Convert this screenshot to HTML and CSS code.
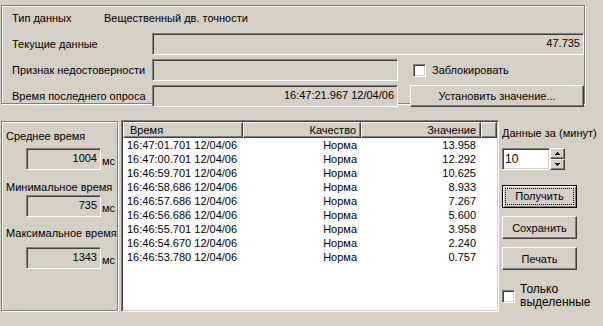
FILE: index.html
```html
<!DOCTYPE html>
<html lang="ru">
<head>
    <meta charset="UTF-8">
    <title>Данные</title>
    <link rel="stylesheet" href="styles.css">
</head>
<body>
    <div class="okno">
        <section class="gruppa verh">
            <div class="stroka tip">
                <span class="metka-tip">Тип данных</span>
                <span>Вещественный дв. точности</span>
            </div>
            <div class="stroka">
                <span class="metka">Текущие данные</span>
                <div class="pole shirokoe">47.735</div>
            </div>
            <div class="stroka">
                <span class="metka">Признак недостоверности</span>
                <div class="pole"></div>
                <label class="flag"><span class="galka"></span>Заблокировать</label>
            </div>
            <div class="stroka">
                <span class="metka">Время последнего опроса</span>
                <div class="pole">16:47:21.967 12/04/06</div>
                <button class="knopka ustanovit">Установить значение...</button>
            </div>
        </section>

        <section class="niz">
            <div class="gruppa vremena">
                <div class="podpis">Среднее время</div>
                <div class="izmerenie i1">
                    <div class="pole malo">1004</div>
                    <span class="ms">мс</span>
                </div>
                <div class="podpis p2">Минимальное время</div>
                <div class="izmerenie i2">
                    <div class="pole malo">735</div>
                    <span class="ms">мс</span>
                </div>
                <div class="podpis p3">Максимальное время</div>
                <div class="izmerenie i3">
                    <div class="pole malo">1343</div>
                    <span class="ms">мс</span>
                </div>
            </div>

            <div class="spisok">
                <div class="zagolovok">
                    <div class="k1">Время</div>
                    <div class="k2">Качество</div>
                    <div class="k3">Значение</div>
                    <div class="k4"></div>
                </div>
                <div class="ryad"><span class="k1">16:47:01.701 12/04/06</span><span class="k2">Норма</span><span class="k3">13.958</span></div>
                <div class="ryad"><span class="k1">16:47:00.701 12/04/06</span><span class="k2">Норма</span><span class="k3">12.292</span></div>
                <div class="ryad"><span class="k1">16:46:59.701 12/04/06</span><span class="k2">Норма</span><span class="k3">10.625</span></div>
                <div class="ryad"><span class="k1">16:46:58.686 12/04/06</span><span class="k2">Норма</span><span class="k3">8.933</span></div>
                <div class="ryad"><span class="k1">16:46:57.686 12/04/06</span><span class="k2">Норма</span><span class="k3">7.267</span></div>
                <div class="ryad"><span class="k1">16:46:56.686 12/04/06</span><span class="k2">Норма</span><span class="k3">5.600</span></div>
                <div class="ryad"><span class="k1">16:46:55.701 12/04/06</span><span class="k2">Норма</span><span class="k3">3.958</span></div>
                <div class="ryad"><span class="k1">16:46:54.670 12/04/06</span><span class="k2">Норма</span><span class="k3">2.240</span></div>
                <div class="ryad"><span class="k1">16:46:53.780 12/04/06</span><span class="k2">Норма</span><span class="k3">0.757</span></div>
            </div>

            <div class="pravo">
                <div class="podpis">Данные за (минут)</div>
                <div class="schetchik">
                    <div class="vvod">10</div>
                    <div class="strelki">
                        <div class="strelka">
                            <svg width="5" height="3" viewBox="0 0 5 3" shape-rendering="crispEdges"><rect x="2" y="0" width="1" height="1"/><rect x="1" y="1" width="3" height="1"/><rect x="0" y="2" width="5" height="1"/></svg>
                        </div>
                        <div class="strelka">
                            <svg width="5" height="3" viewBox="0 0 5 3" shape-rendering="crispEdges"><rect x="0" y="0" width="5" height="1"/><rect x="1" y="1" width="3" height="1"/><rect x="2" y="2" width="1" height="1"/></svg>
                        </div>
                    </div>
                </div>
                <button class="knopka glavnaya"><span>Получить</span></button>
                <button class="knopka">Сохранить</button>
                <button class="knopka">Печать</button>
                <label class="flag-niz"><span class="galka"></span><span class="tekst">Только<br>выделенные</span></label>
            </div>
        </section>
    </div>
</body>
</html>
```

FILE: styles.css
```css
body {
    margin: 0;
    background-color: #d4d0c8;
    font-family: "Liberation Sans", Arial, sans-serif;
    font-size: 11px;
    color: #000;
}

.okno {
    box-sizing: border-box;
    width: 603px;
    height: 326px;
    padding: 5px 0 0 1px;
    overflow: hidden;
}

/* рамка группы (вдавленная линия) */
.gruppa {
    box-sizing: border-box;
    border: 1px solid #808080;
    box-shadow: inset 1px 1px #fff, 1px 1px #fff;
}

.verh {
    width: 584px;
    height: 99px;
    padding-left: 10px;
}

.stroka {
    display: flex;
    align-items: center;
    height: 22px;
    margin-top: 4px;
    white-space: nowrap;
}

.stroka.tip {
    height: 23px;
    margin-top: 0;
}

.metka-tip {
    width: 92px;
}

.metka {
    width: 140px;
}

.pole {
    box-sizing: border-box;
    width: 246px;
    height: 22px;
    border: 1px solid;
    border-color: #808080 #fff #fff #808080;
    box-shadow: inset 1px 1px #404040, inset -1px -1px #d4d0c8;
    background-color: #d4d0c8;
    text-align: right;
    padding-right: 3px;
    line-height: 19px;
    white-space: nowrap;
}

.pole.shirokoe {
    flex: 1;
}

.galka {
    box-sizing: border-box;
    display: inline-block;
    width: 13px;
    height: 13px;
    border: 1px solid;
    border-color: #808080 #fff #fff #808080;
    box-shadow: inset 1px 1px #404040, inset -1px -1px #d4d0c8;
    background-color: #fff;
}

.flag {
    display: flex;
    align-items: center;
    margin-left: 15px;
}

.flag .galka {
    margin-right: 6px;
}

.knopka {
    box-sizing: border-box;
    display: block;
    width: 75px;
    height: 23px;
    margin: 8px 0 0 0;
    padding: 0;
    font-family: inherit;
    font-size: 11px;
    color: #000;
    background-color: #d4d0c8;
    border: 1px solid;
    border-color: #fff #404040 #404040 #fff;
    box-shadow: inset -1px -1px #808080;
    border-radius: 0;
}

.knopka.ustanovit {
    width: 174px;
    height: 22px;
    margin: 0 0 0 12px;
}

.knopka.glavnaya {
    margin-top: 15px;
    padding: 2px;
    border: 1px solid #000;
    box-shadow: inset 1px 1px #fff, inset -1px -1px #808080;
}

.knopka.glavnaya span {
    display: block;
    height: 100%;
    box-sizing: border-box;
    border: 1px dotted #000;
    line-height: 15px;
}

.niz {
    display: flex;
    align-items: flex-start;
    margin-top: 16px;
}

.vremena {
    width: 117px;
    height: 190px;
    margin-top: 1px;
    padding: 7px 0 0 4px;
}

.podpis {
    line-height: 14px;
    white-space: nowrap;
}

.podpis.p2 {
    margin-top: 10px;
}

.podpis.p3 {
    margin-top: 9px;
}

.izmerenie {
    display: flex;
    align-items: flex-start;
    margin-left: 20px;
}

.izmerenie.i1 {
    margin-top: 5px;
}

.izmerenie.i2 {
    margin-top: 1px;
}

.izmerenie.i3 {
    margin-top: 7px;
}

.pole.malo {
    width: 75px;
}

.ms {
    margin: 6px 0 0 1px;
    line-height: 14px;
}

.spisok {
    box-sizing: border-box;
    width: 378px;
    height: 192px;
    margin-left: 3px;
    padding: 1px;
    background-color: #fff;
    border: 1px solid;
    border-color: #808080 #fff #fff #808080;
    box-shadow: inset 1px 1px #404040, inset -1px -1px #d4d0c8;
}

.zagolovok {
    display: flex;
    height: 16px;
    background-color: #d4d0c8;
}

.zagolovok div {
    box-sizing: border-box;
    height: 16px;
    line-height: 14px;
    border: 1px solid;
    border-color: #fff #404040 #404040 #fff;
    box-shadow: inset -1px -1px #808080;
    padding-right: 4px;
    text-align: right;
}

.zagolovok .k1 {
    padding-left: 6px;
    text-align: left;
}

.k1 {
    width: 120px;
}

.k2 {
    width: 118px;
}

.k3 {
    width: 120px;
}

.zagolovok .k4 {
    flex: 1;
    padding: 0;
}

.ryad {
    display: flex;
    height: 14px;
    line-height: 14px;
    white-space: nowrap;
}

.ryad span {
    box-sizing: border-box;
    text-align: right;
}

.ryad .k1 {
    padding-left: 4px;
    text-align: left;
}

.ryad .k2 {
    padding-right: 4px;
}

.ryad .k3 {
    padding-right: 5px;
}

.pravo {
    width: 75px;
    margin-left: 3px;
    padding-top: 6px;
}

.schetchik {
    display: flex;
    margin-top: 8px;
    height: 22px;
}

.vvod {
    box-sizing: border-box;
    width: 48px;
    height: 22px;
    padding-left: 2px;
    line-height: 20px;
    font-size: 12px;
    background-color: #fff;
    border: 1px solid;
    border-color: #808080 #fff #fff #808080;
    box-shadow: inset 1px 1px #404040, inset -1px -1px #d4d0c8;
}

.strelki {
    display: flex;
    flex-direction: column;
    width: 15px;
}

.strelka {
    box-sizing: border-box;
    height: 11px;
    display: flex;
    align-items: center;
    justify-content: center;
    background-color: #d4d0c8;
    border: 1px solid;
    border-color: #fff #404040 #404040 #fff;
    box-shadow: inset -1px -1px #808080;
}

.strelka svg {
    display: block;
    fill: #000;
}

.flag-niz {
    display: flex;
    align-items: center;
    margin-top: 13px;
}

.flag-niz .galka {
    flex: none;
    margin-right: 5px;
}

.flag-niz .tekst {
    font-size: 12px;
    line-height: 13px;
}
```
